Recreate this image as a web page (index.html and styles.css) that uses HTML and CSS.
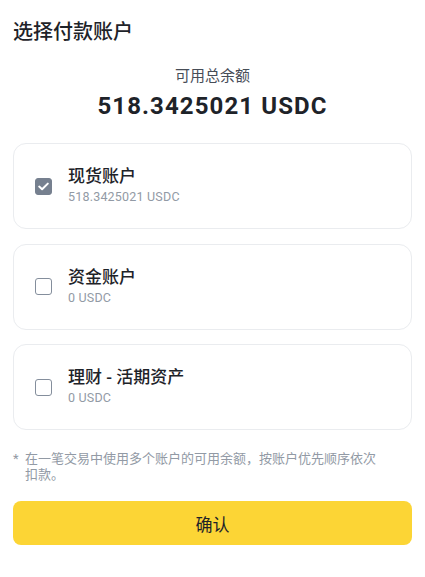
FILE: index.html
```html
<!DOCTYPE html>
<html lang="zh-CN">

<head>
  <meta charset="UTF-8">
  <meta name="viewport" content="width=device-width, initial-scale=1.0">
  <title>选择付款账户</title>
  <link rel="stylesheet" href="styles.css">
</head>

<body>
  <div class="sheet">
    <h1 class="sheet-title">选择付款账户</h1>

    <div class="balance">
      <div class="balance-label">可用总余额</div>
      <div class="balance-amount">518.3425021 USDC</div>
    </div>

    <div class="accounts">
      <div class="account">
        <span class="check checked">
          <svg width="11" height="9" viewBox="0 0 11 9">
            <polyline points="1.2,4.6 4.1,7.3 9.8,1.6" fill="none" stroke="#fff" stroke-width="2" stroke-linecap="round" stroke-linejoin="round" />
          </svg>
        </span>
        <div class="account-info">
          <div class="account-name">现货账户</div>
          <div class="account-amount">518.3425021 USDC</div>
        </div>
      </div>

      <div class="account">
        <span class="check"></span>
        <div class="account-info">
          <div class="account-name">资金账户</div>
          <div class="account-amount">0 USDC</div>
        </div>
      </div>

      <div class="account">
        <span class="check"></span>
        <div class="account-info">
          <div class="account-name">理财 - 活期资产</div>
          <div class="account-amount">0 USDC</div>
        </div>
      </div>
    </div>

    <p class="note"><span class="note-star">*</span><span>在一笔交易中使用多个账户的可用余额，按账户优先顺序依次扣款。</span></p>

    <button class="btn-confirm">确认</button>
  </div>
</body>

</html>
```

FILE: styles.css
```css
body {
  margin: 0;
  padding: 0;
  background: #fff;
  color: #1e2329;
  font-family: 'Roboto', 'Noto Sans CJK SC', sans-serif;
}

.sheet {
  padding: 18px 13px 0;
}

.sheet-title {
  margin: 0;
  font-size: 20px;
  line-height: 28px;
  font-weight: 500;
}

.balance {
  margin-top: 20px;
  text-align: center;
}

.balance-label {
  font-size: 15px;
  line-height: 20px;
  color: #474d57;
}

.balance-amount {
  margin-top: 4px;
  font-size: 24px;
  line-height: 32px;
  font-weight: 700;
  letter-spacing: 1.1px;
}

.accounts {
  margin-top: 21px;
  display: flex;
  flex-direction: column;
  gap: 14.5px;
}

.account {
  display: flex;
  align-items: center;
  gap: 16px;
  padding: 21px;
  border: 1px solid #eaecef;
  border-radius: 13px;
}

.check {
  width: 17px;
  height: 17px;
  box-sizing: border-box;
  border: 1.5px solid #848e9c;
  border-radius: 3px;
  display: flex;
  align-items: center;
  justify-content: center;
  flex-shrink: 0;
}

.check.checked {
  background: #76808f;
  border-color: #76808f;
}

.account-name {
  font-size: 17px;
  line-height: 22px;
  font-weight: 500;
}

.account-amount {
  font-size: 12.5px;
  line-height: 20px;
  letter-spacing: 0.2px;
  color: #929aa5;
}

.note {
  margin: 21px 0 0;
  padding-right: 30px;
  display: flex;
  gap: 5px;
  font-size: 13px;
  line-height: 16px;
  color: #929aa5;
}

.note-star {
  width: 7px;
  flex-shrink: 0;
}

.btn-confirm {
  display: block;
  width: 100%;
  height: 44px;
  margin-top: 18px;
  border: none;
  border-radius: 8px;
  background: #fcd535;
  color: #1e2329;
  font-family: inherit;
  font-size: 17px;
  font-weight: 400;
  cursor: pointer;
}
```
